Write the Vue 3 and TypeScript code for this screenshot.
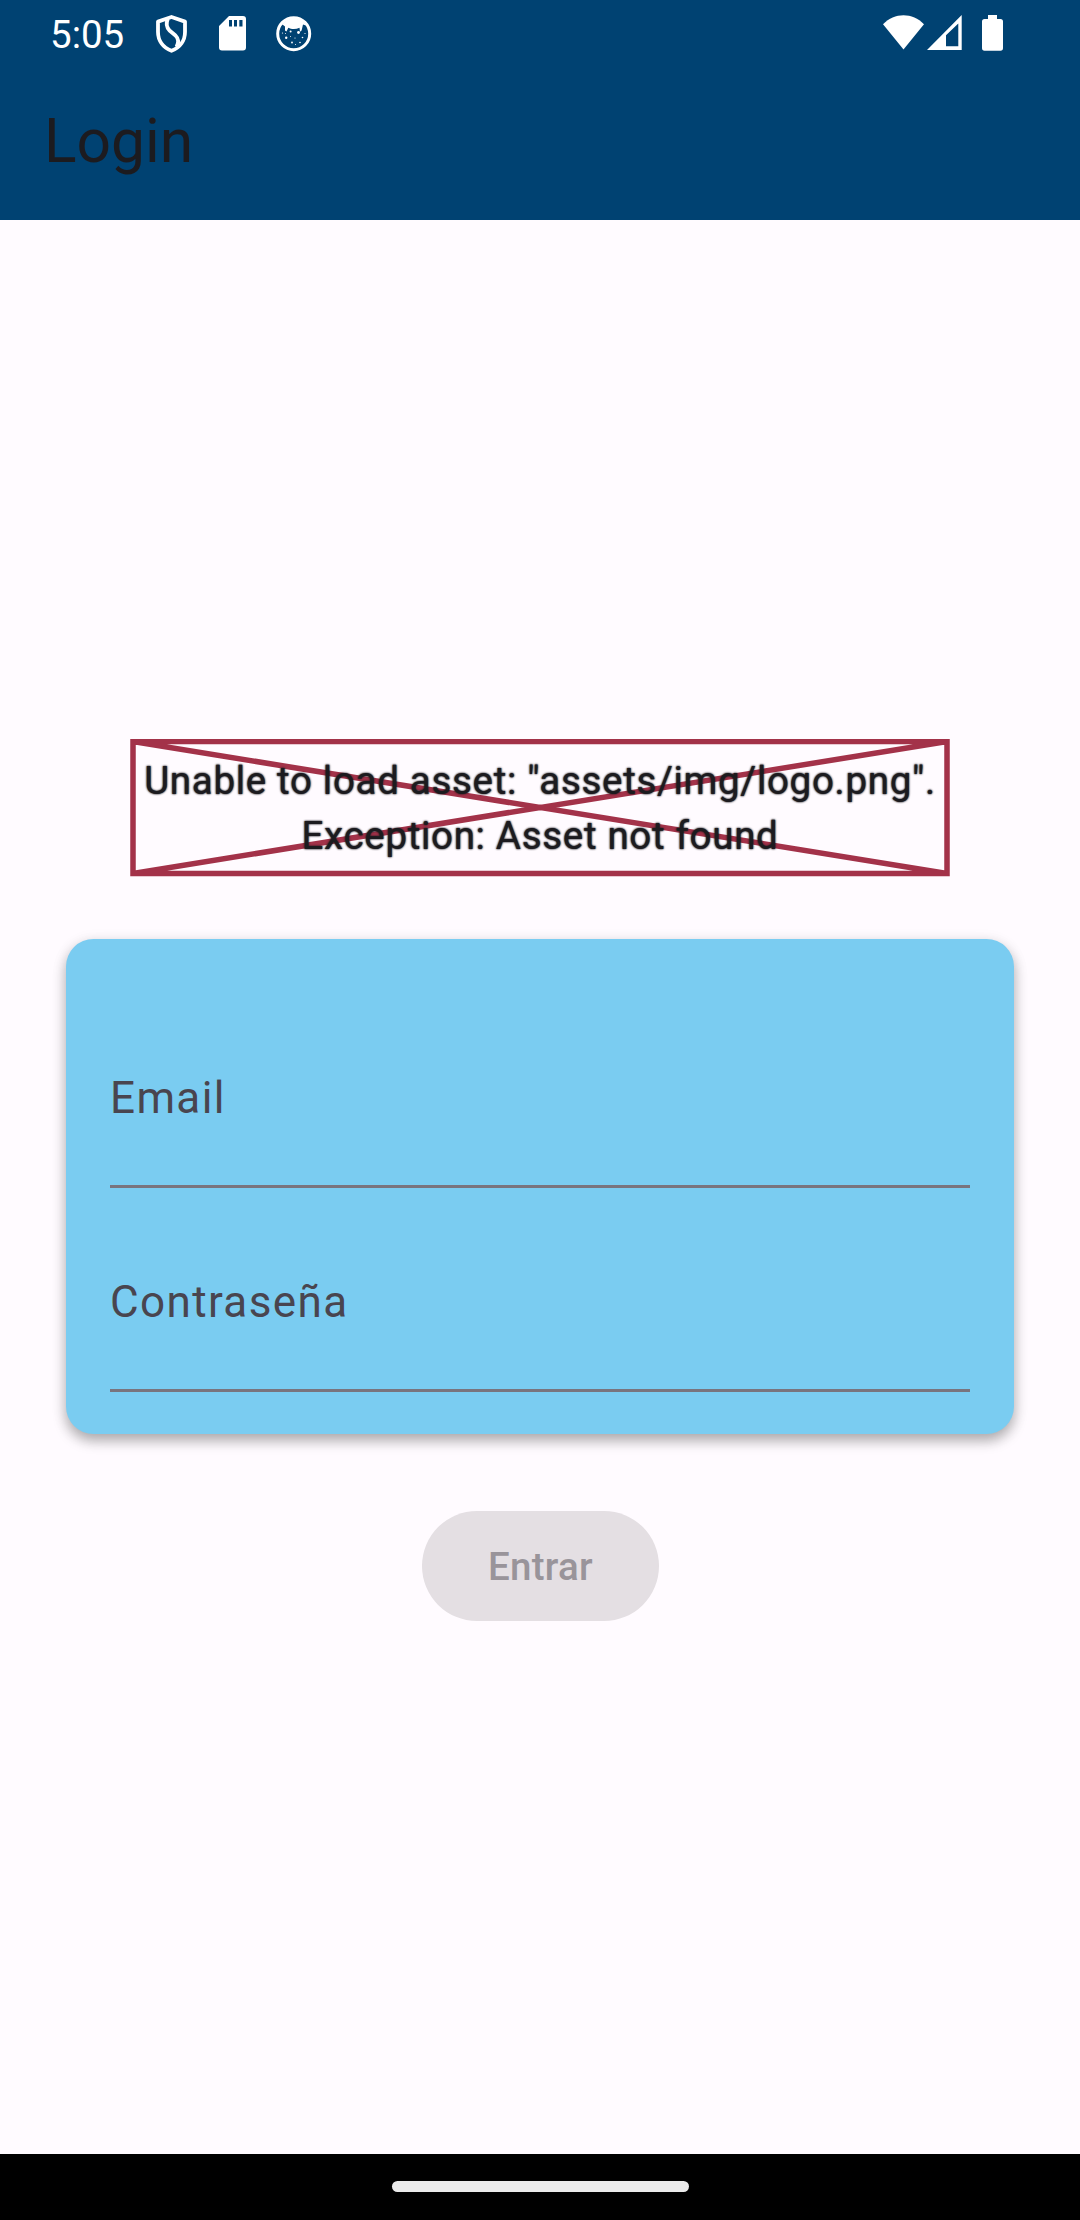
<script setup lang="ts">
import { ref } from 'vue'

interface Field {
  id: string
  label: string
}

const time = ref<string>('5:05')
const title = ref<string>('Login')
const errorLines: string[] = [
  'Unable to load asset: "assets/img/logo.png".',
  'Exception: Asset not found',
]
const fields: Field[] = [
  { id: 'email', label: 'Email' },
  { id: 'password', label: 'Contraseña' },
]
</script>

<template>
  <div class="screen">
    <header class="top">
      <div class="status">
        <span class="clock">{{ time }}</span>
        <svg class="shield" width="32" height="38" viewBox="0 0 32 38" fill="none" stroke="#fff" stroke-width="3.8" stroke-linejoin="round">
          <path d="M15.5 2 29 6.6V17C29 25.500 24 32.500 15.500 35.800C7 32.500 2 25.500 2 17V6.600Z" />
          <path d="M11.800 4C10 8 10.500 12.200 13.500 15.500L19.500 20.500C23 24 23 27.500 20.500 32" />
        </svg>
        <svg class="sd" width="27" height="35" viewBox="0 0 27 35">
          <path fill="#fff" fill-rule="evenodd" d="M10 0H24Q27 0 27 3V31.500Q27 34.500 24 34.500H3Q0 34.500 0 31.500V10ZM10 4V10.500H13V4ZM15 4V10.500H18V4ZM20.300 4V10.500H23.500V4Z" />
        </svg>
        <svg class="face" width="36" height="36" viewBox="0 0 36 36">
          <circle cx="17.700" cy="17.700" r="16" fill="none" stroke="#fff" stroke-width="3" />
          <path fill="#fff" d="M5.500 9.500C11 0 24.500 0 30 9.500L27 8.500L25.600 14.500L24 15.800L23.500 11.700C20 13.400 15.500 13.400 12.300 11.700L10.500 15.600L9 14.500V10.500L6.500 8.500Z" />
          <g fill="#fff">
            <circle cx="14.600" cy="15.500" r="1" />
            <circle cx="22.500" cy="16.500" r="1.400" />
            <circle cx="10.200" cy="21.800" r="1.200" />
            <circle cx="19" cy="22" r=".6" />
            <circle cx="26.500" cy="21.500" r=".8" />
            <circle cx="16" cy="26.500" r=".9" />
            <circle cx="24" cy="26.500" r=".8" />
            <circle cx="6.500" cy="17" r=".6" />
            <circle cx="29" cy="17.500" r=".6" />
            <circle cx="14.500" cy="20.500" r=".5" />
            <circle cx="19.500" cy="28.500" r=".5" />
            <circle cx="9.500" cy="17.500" r=".5" />
          </g>
        </svg>
        <span class="gap"></span>
        <svg class="wifi" width="42" height="35" viewBox="0 0 42 35">
          <path fill="#fff" d="M20.500 34.500 0 9.200C11.500-2.900 29.500-2.900 41 9.200Z" />
        </svg>
        <svg class="signal" width="36" height="36" viewBox="0 0 36 36">
          <path fill="#fff" fill-rule="evenodd" d="M0 35 34.700 0V35ZM19 20.300V31.300H31.300V8.500Z" />
        </svg>
        <svg class="battery" width="21" height="36" viewBox="0 0 21 36">
          <path fill="#fff" d="M6 0H15V4H18.500Q21 4 21 6.500V33Q21 35.700 18.500 35.700H2.500Q0 35.700 0 33V6.500Q0 4 2.500 4H6Z" />
        </svg>
      </div>
      <h1 class="title">{{ title }}</h1>
    </header>

    <main class="content">
      <div class="missing">
        <svg class="cross" width="820" height="138" viewBox="0 0 820 138" fill="none" stroke="#a33249" stroke-width="5.500">
          <path d="M3 2.500H817V134.500H3ZM3 2.500 817 134.500M817 2.500 3 134.500" />
        </svg>
        <p v-for="line in errorLines" :key="line" class="line">{{ line }}</p>
      </div>

      <section class="card">
        <div v-for="field in fields" :key="field.id" class="field">
          <span class="label">{{ field.label }}</span>
        </div>
      </section>

      <button class="submit" type="button" disabled>Entrar</button>
    </main>

    <footer class="nav"><span class="handle"></span></footer>
  </div>
</template>

<style>
body {
  margin: 0;
}
</style>

<style scoped>
.screen {
  display: flex;
  flex-direction: column;
  width: 1080px;
  height: 2220px;
  overflow: hidden;
  background: #fffbff;
  font-family: Roboto, sans-serif;
}

.top {
  height: 220px;
  flex: none;
  background: #004272;
}

.status {
  display: flex;
  align-items: flex-start;
  box-sizing: border-box;
  height: 66px;
  padding: 15px 77px 0 50px;
}

.status svg {
  flex: none;
  display: block;
}

.clock {
  width: 106px;
  margin-top: -3px;
  color: #fff;
  font-size: 38.5px;
  line-height: 45px;
}

.sd {
  margin: 1px 0 0 31px;
}

.face {
  margin: 1px 0 0 30px;
}

.gap {
  flex: 1;
}

.signal {
  margin-left: 2px;
}

.battery {
  margin-left: 19px;
}

.title {
  margin: 0;
  padding: 37px 0 0 44px;
  color: #1c1b1f;
  font-size: 60.5px;
  font-weight: 400;
  line-height: 77px;
}

.content {
  display: flex;
  flex: 1;
  flex-direction: column;
  align-items: center;
}

.missing {
  position: relative;
  box-sizing: border-box;
  width: 820px;
  height: 138px;
  margin-top: 519px;
  padding-top: 13.500px;
}

.cross {
  position: absolute;
  top: 0;
  left: 0;
}

.line {
  position: relative;
  margin: 0;
  color: #1c1b1f;
  font-size: 38.5px;
  font-weight: 400;
  letter-spacing: 0.6875px;
  line-height: 55px;
  text-align: center;
  text-shadow: 0 0 2px #1c1b1f, 0 0 2px rgba(28, 27, 31, 0.6);
  white-space: nowrap;
}

.card {
  box-sizing: border-box;
  width: 948px;
  height: 495px;
  margin-top: 62.3px;
  padding: 44.7px 44px 0;
  border-radius: 27.5px;
  background: #7accf1;
  box-shadow: 0 7px 13px rgba(0, 0, 0, 0.28), 0 3px 16px rgba(0, 0, 0, 0.09);
}

.field {
  box-sizing: border-box;
  height: 204px;
  padding-top: 81px;
  border-bottom: 3px solid #79747e;
}

.label {
  display: block;
  color: #49454f;
  font-size: 44px;
  letter-spacing: 1.375px;
  line-height: 66px;
}

.submit {
  width: 237px;
  height: 110px;
  margin-top: 76.9px;
  padding: 0 0 0 1px;
  border: 0;
  border-radius: 55px;
  background: #e4dfe3;
  color: #99949a;
  font-family: inherit;
  font-size: 38.5px;
  font-weight: 500;
  letter-spacing: 0.275px;
}

.nav {
  display: flex;
  flex: none;
  justify-content: center;
  height: 66px;
  background: #000;
}

.handle {
  width: 297px;
  height: 11px;
  margin-top: 27px;
  border-radius: 6px;
  background: #ebebeb;
}
</style>
